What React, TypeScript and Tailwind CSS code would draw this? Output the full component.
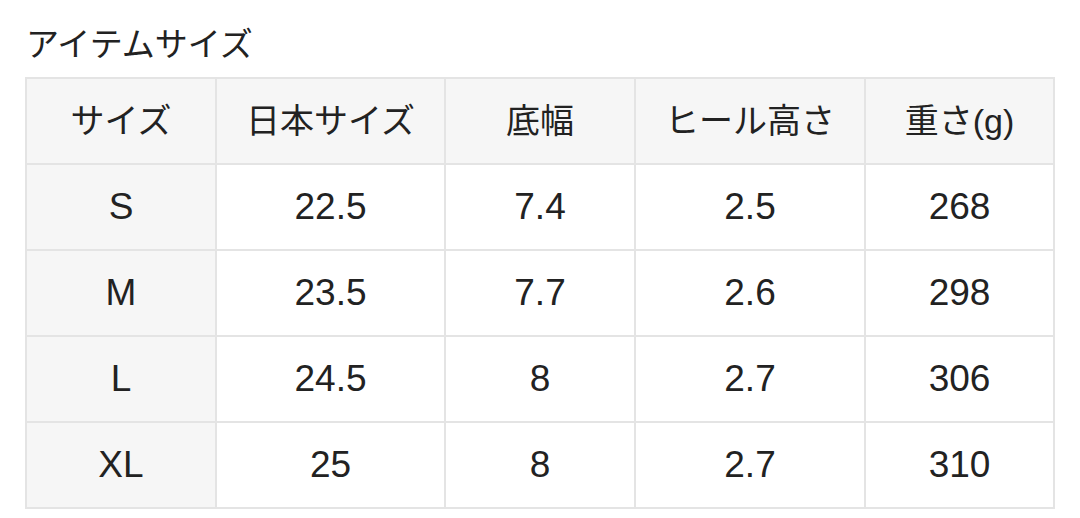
import React from "react";

const headers = ["サイズ", "日本サイズ", "底幅", "ヒール高さ", "重さ(g)"];

const rows = [
  ["S", "22.5", "7.4", "2.5", "268"],
  ["M", "23.5", "7.7", "2.6", "298"],
  ["L", "24.5", "8", "2.7", "306"],
  ["XL", "25", "8", "2.7", "310"],
];

const widths = ["w-[190px]", "w-[229px]", "w-[190px]", "w-[230px]", "w-[189px]"];

export default function App() {
  return (
    <div
      className="min-h-screen bg-white pl-[25px] pt-[26px] text-[#222]"
      style={{ fontFamily: '"Liberation Sans", "Noto Sans CJK JP", sans-serif' }}
    >
      <h2 className="mb-[13px] pl-[1px] text-[33px] leading-[38px] font-normal">アイテムサイズ</h2>
      <table className="w-[1028px] table-fixed border-collapse text-[37px]">
        <thead>
          <tr className="h-[86px] bg-[#f6f6f6]">
            {headers.map((h, i) => (
              <th
                key={h}
                className={`${widths[i]} border-2 border-[#e4e4e4] text-center text-[34px] font-normal`}
              >
                {h}
              </th>
            ))}
          </tr>
        </thead>
        <tbody>
          {rows.map((row) => (
            <tr key={row[0]} className="h-[86px]">
              {row.map((cell, i) =>
                i === 0 ? (
                  <th
                    key={i}
                    className="border-2 border-[#e4e4e4] bg-[#f6f6f6] text-center font-normal"
                  >
                    {cell}
                  </th>
                ) : (
                  <td key={i} className="border-2 border-[#e4e4e4] text-center">
                    {cell}
                  </td>
                )
              )}
            </tr>
          ))}
        </tbody>
      </table>
    </div>
  );
}
